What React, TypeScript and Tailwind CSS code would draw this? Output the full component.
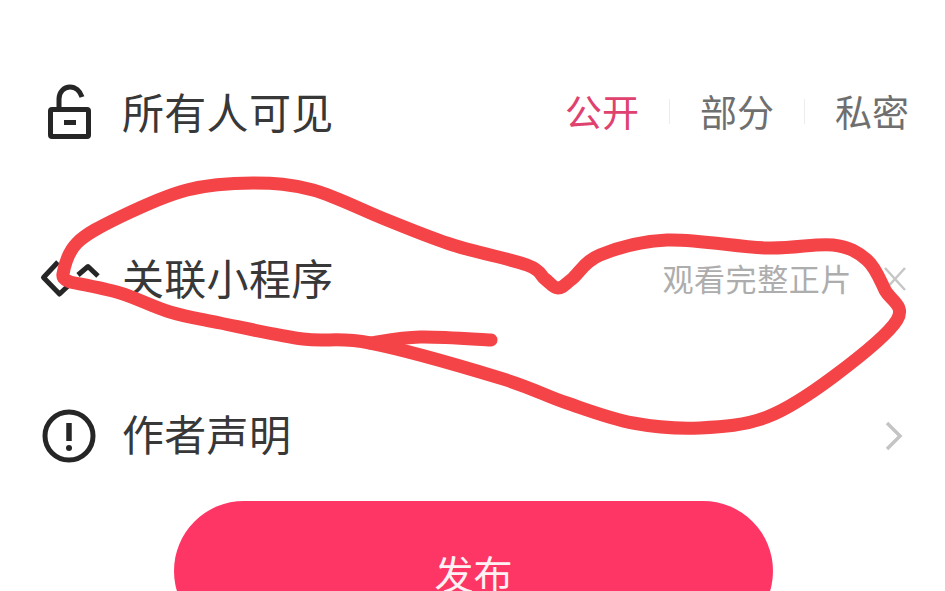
const labelClass = "ml-[-2px] pb-[5px] text-[42px] leading-none tracking-[0.3px] text-[#383838]";

function LockIcon() {
  return (
    <svg width="60" height="60" viewBox="0 0 60 60" fill="none" stroke="#262626" strokeWidth="5">
      <path d="M19 26V16C19 9 24 4 30 4C35.5 4 40 8 42 14" />
      <rect x="10.5" y="26.5" width="38" height="27" rx="1.5" />
      <path d="M24 39.5H36" />
    </svg>
  );
}

function LinkIcon() {
  return (
    <svg width="60" height="60" viewBox="0 0 60 60" fill="none" stroke="#262626" strokeWidth="5" strokeLinejoin="round">
      <path d="M18 13L3.5 28.5L19.5 45L28 37" />
      <path d="M38 26L48 17.5L58 27" />
    </svg>
  );
}

function NoticeIcon() {
  return (
    <svg width="60" height="60" viewBox="0 0 60 60" fill="none" stroke="#262626">
      <circle cx="29" cy="30" r="24" strokeWidth="5" />
      <path d="M29 17V35" strokeWidth="5.5" />
      <circle cx="29" cy="42" r="3" fill="#262626" stroke="none" />
    </svg>
  );
}

// points the pen went through, smoothed into one curve
function smooth(points: number[][]) {
  let d = `M${points[0][0]} ${points[0][1]}`;
  for (let i = 0; i < points.length - 1; i++) {
    const p0 = points[Math.max(i - 1, 0)];
    const p1 = points[i];
    const p2 = points[i + 1];
    const p3 = points[Math.min(i + 2, points.length - 1)];
    d += `C${p1[0] + (p2[0] - p0[0]) / 6} ${p1[1] + (p2[1] - p0[1]) / 6} ${p2[0] - (p3[0] - p1[0]) / 6} ${p2[1] - (p3[1] - p1[1]) / 6} ${p2[0]} ${p2[1]}`;
  }
  return d;
}

const OUTLINE = [
  [70, 282], [63, 274], [77, 243], [120, 217], [187, 190], [253, 183], [313, 190], [387, 220], [453, 245],
  [527, 265], [545, 279], [558, 288], [572, 279], [600, 255], [667, 240], [767, 248], [833, 245], [867, 260], [885, 290], [897, 320],
  [833, 377], [767, 417], [700, 428], [633, 423], [567, 403], [500, 378], [370, 343], [303, 339], [220, 323],
  [170, 312], [120, 293], [70, 282],
];
const BRANCH = [[370, 343], [420, 337], [491, 340]];

function Scribble() {
  return (
    <svg className="absolute left-0 top-0 pointer-events-none" width="945" height="591" viewBox="0 0 945 591" fill="none" stroke="#f44448" strokeWidth="13" strokeLinecap="round" strokeLinejoin="round">
      <path d={smooth(OUTLINE)} />
      <path d={smooth(BRANCH)} />
    </svg>
  );
}

export default function App() {
  return (
    <div className="relative h-[591px] w-[945px] overflow-hidden bg-white pt-[38px] font-['Noto_Sans_CJK_SC',sans-serif]">
      {/* 可见范围 */}
      <div className="flex h-[150px] items-center pl-[40px] pr-[36px]">
        <div className="mr-[24px] w-[60px]"><LockIcon /></div>
        <span className={labelClass}>所有人可见</span>
        <div className="ml-auto flex items-center pb-[4px] text-[37px] leading-none">
          <span className="text-[#e0426f]">公开</span>
          <span className="mx-[30px] h-[25px] w-px bg-[#ececec]" />
          <span className="text-[#6f6f6f]">部分</span>
          <span className="mx-[30px] h-[25px] w-px bg-[#ececec]" />
          <span className="text-[#6f6f6f]">私密</span>
        </div>
      </div>

      {/* 关联小程序 */}
      <div className="flex h-[182px] items-center pl-[40px] pr-[39px]">
        <div className="mr-[24px] w-[60px]"><LinkIcon /></div>
        <span className={labelClass}>关联小程序</span>
        <div className="ml-auto flex items-center">
          <span className="pb-[4px] text-[31px] leading-none tracking-[0.6px] text-[#adadad]">观看完整正片</span>
          <svg className="ml-[32px]" width="22" height="24" viewBox="0 0 22 24" fill="none" stroke="#c6c6c6" strokeWidth="2.5">
            <path d="M1 1L21 23M21 1L1 23" />
          </svg>
        </div>
      </div>

      {/* 作者声明 */}
      <div className="flex h-[131px] items-center pl-[40px] pr-[39px]">
        <div className="mr-[24px] w-[60px]"><NoticeIcon /></div>
        <span className={labelClass}>作者声明</span>
        <svg className="ml-auto" width="24" height="32" viewBox="0 0 24 32" fill="none" stroke="#c4c4c4" strokeWidth="3.5">
          <path d="M5 3L18 16L5 29" />
        </svg>
      </div>

      <div className="ml-[174px] flex h-[140px] w-[599px] justify-center rounded-[70px] bg-[#fe3665] pt-[52px]">
        <span className="text-[39px] leading-none text-[#fdf1f4]">发布</span>
      </div>

      <Scribble />
    </div>
  );
}
